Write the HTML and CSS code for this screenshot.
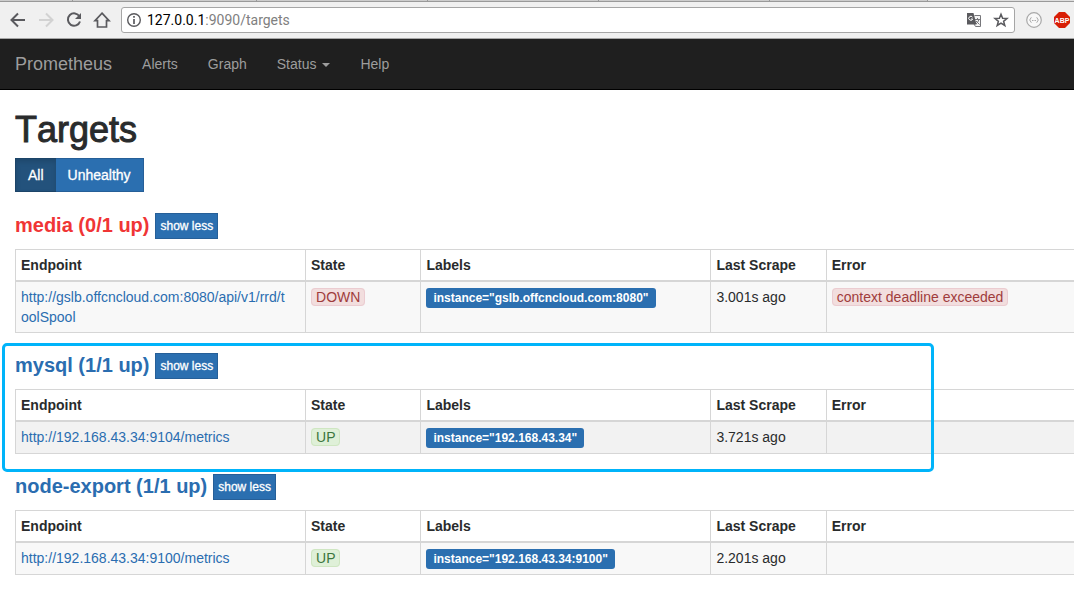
FILE: index.html
```html
<!DOCTYPE html>
<html lang="en">
<head>
	<meta charset="UTF-8">
	<title>Prometheus Time Series Collection and Processing Server</title>
	<link rel="stylesheet" href="styles.css">
</head>
<body>
	<div class="browser">
		<div class="tab-strip">
			<span class="tab tab-active"></span>
			<span class="tab tab-wide"></span>
			<span class="tab"></span>
			<span class="tab"></span>
			<span class="tab"></span>
			<span class="tab tab-last"></span>
		</div>
		<div class="toolbar">
			<button class="tool" type="button" aria-label="Back">
				<svg width="18" height="18" viewBox="0 0 18 18"><path d="M16 9H3M9 2.500L2.500 9L9 15.500" fill="none" stroke="#5a5a5e" stroke-width="2"/></svg>
			</button>
			<button class="tool" type="button" aria-label="Forward" disabled>
				<svg width="18" height="18" viewBox="0 0 18 18"><path d="M2 9H15M9 2.500L15.500 9L9 15.500" fill="none" stroke="#d2d2d2" stroke-width="2"/></svg>
			</button>
			<button class="tool" type="button" aria-label="Reload">
				<svg width="18" height="18" viewBox="0 0 18 18"><path d="M14.500 5.500A6.200 6.200 0 1 0 15 10.500" fill="none" stroke="#5a5a5e" stroke-width="2"/><path d="M16 2V8H10Z" fill="#5a5a5e"/></svg>
			</button>
			<button class="tool" type="button" aria-label="Home">
				<svg width="18" height="18" viewBox="0 0 18 18"><path d="M9 2.200L16 9.700H13.500V16H4.500V9.700H2Z" fill="none" stroke="#5a5a5e" stroke-width="1.700"/></svg>
			</button>
			<div class="address">
				<svg width="16" height="16" viewBox="0 0 16 16"><circle cx="8" cy="8" r="6.300" fill="none" stroke="#5a5a5e" stroke-width="1.400"/><path d="M8 7V12M8 4V5.700" stroke="#5a5a5e" stroke-width="1.700"/></svg>
				<div class="url" role="textbox" aria-label="Address"><b>127.0.0.1</b>:9090/targets</div>
				<button class="tool" type="button" aria-label="Translate">
					<svg width="16" height="16" viewBox="0 0 16 16"><path d="M8.500 3.500H14.500V14.500H9.500L8 12" fill="#f4f4f4" stroke="#77777b"/><path d="M1 1H7.500L10.500 12.500H1Z" fill="#5a5a5e"/><path d="M6.500 5.200A2 2 0 1 0 6.700 7H5" fill="none" stroke="#fff"/><path d="M9 7.500H14M11.500 6V7.500M13 7.500Q12 10.500 10 12M10 9L13.500 12.500" fill="none" stroke="#77777b"/></svg>
				</button>
				<button class="tool" type="button" aria-label="Bookmark">
					<svg width="16" height="16" viewBox="0 0 16 16"><path d="M8 2.200L9.600 6.300L14 6.500L10.600 9.300L11.800 13.500L8 11.100L4.200 13.500L5.400 9.300L2 6.500L6.400 6.300Z" fill="none" stroke="#5a5a5e" stroke-width="1.500"/></svg>
				</button>
			</div>
			<button class="tool" type="button" aria-label="JSON viewer">
				<svg width="16" height="16" viewBox="0 0 16 16"><circle cx="8" cy="8" r="7.300" fill="#f8f8f8" stroke="#a9a9a9" stroke-width="1.200"/><path d="M5.500 5.500Q4.500 5.500 4.500 7L3.500 8L4.500 9Q4.500 10.500 5.500 10.500M10.500 5.500Q11.500 5.500 11.500 7L12.500 8L11.500 9Q11.500 10.500 10.500 10.500" fill="none" stroke="#aaa"/><path d="M6 8.500H10" stroke="#aaa" stroke-dasharray="1 0.500"/></svg>
			</button>
			<button class="tool" type="button" aria-label="Adblock Plus">
				<svg width="16" height="16" viewBox="0 0 16 16"><path d="M5 0H11L16 5V11L11 16H5L0 11V5Z" fill="#d81e05"/><text class="abp" x="8" y="11" text-anchor="middle">ABP</text></svg>
			</button>
		</div>
	</div>

	<nav class="navbar">
		<a class="navbar-brand" href="#">Prometheus</a>
		<a href="#">Alerts</a>
		<a href="#">Graph</a>
		<a href="#">Status <span class="caret"></span></a>
		<a href="#">Help</a>
	</nav>

	<div class="container-fluid">
		<h1>Targets</h1>
		<div class="btn-group">
			<button class="btn active" type="button">All</button>
			<button class="btn" type="button">Unhealthy</button>
		</div>

		<section class="job">
			<h2 class="job-header"><a class="danger" href="#job-media">media (0/1 up)</a> <button class="btn btn-xs" type="button">show less</button></h2>
			<table class="table" id="job-media">
				<thead>
					<tr>
						<th class="col-endpoint">Endpoint</th>
						<th class="col-state">State</th>
						<th class="col-labels">Labels</th>
						<th class="col-scrape">Last Scrape</th>
						<th>Error</th>
					</tr>
				</thead>
				<tbody>
					<tr>
						<td><a href="#">http://gslb.offcncloud.com:8080/api/v1/rrd/t<wbr>oolSpool</a></td>
						<td><span class="alert alert-danger">DOWN</span></td>
						<td><span class="label">instance="gslb.offcncloud.com:8080"</span></td>
						<td>3.001s ago</td>
						<td><span class="alert alert-danger">context deadline exceeded</span></td>
					</tr>
				</tbody>
			</table>
		</section>

		<section class="job job-marked">
			<h2 class="job-header"><a href="#job-mysql">mysql (1/1 up)</a> <button class="btn btn-xs" type="button">show less</button></h2>
			<table class="table" id="job-mysql">
				<thead>
					<tr>
						<th class="col-endpoint">Endpoint</th>
						<th class="col-state">State</th>
						<th class="col-labels">Labels</th>
						<th class="col-scrape">Last Scrape</th>
						<th>Error</th>
					</tr>
				</thead>
				<tbody>
					<tr class="hovered">
						<td><a href="#">http://192.168.43.34:9104/metrics</a></td>
						<td><span class="alert alert-success">UP</span></td>
						<td><span class="label">instance="192.168.43.34"</span></td>
						<td>3.721s ago</td>
						<td></td>
					</tr>
				</tbody>
			</table>
		</section>

		<section class="job">
			<h2 class="job-header"><a href="#job-node-export">node-export (1/1 up)</a> <button class="btn btn-xs" type="button">show less</button></h2>
			<table class="table" id="job-node-export">
				<thead>
					<tr>
						<th class="col-endpoint">Endpoint</th>
						<th class="col-state">State</th>
						<th class="col-labels">Labels</th>
						<th class="col-scrape">Last Scrape</th>
						<th>Error</th>
					</tr>
				</thead>
				<tbody>
					<tr>
						<td><a href="#">http://192.168.43.34:9100/metrics</a></td>
						<td><span class="alert alert-success">UP</span></td>
						<td><span class="label">instance="192.168.43.34:9100"</span></td>
						<td>2.201s ago</td>
						<td></td>
					</tr>
				</tbody>
			</table>
		</section>
	</div>
</body>
</html>
```
FILE: styles.css
```css
*,
*::after {
	box-sizing: border-box;
}

body {
	margin: 0;
	background: #fff;
	color: #292b2c;
	font: 14px/20px "Helvetica Neue", "Liberation Sans", Arial, sans-serif;
}

a {
	color: #2a6db0;
	text-decoration: none;
}

/* browser chrome */
.tab-strip {
	display: flex;
	height: 2px;
	background: #dedede;
	border-bottom: 1px solid #999;
}

.tab {
	width: 171px;
	background: #ccc;
	border-right: 1px solid #999;
}

.tab-active {
	width: 73px;
}

.tab-wide {
	width: 184px;
}

.tab-last {
	width: 158px;
}

.toolbar {
	display: flex;
	align-items: center;
	gap: 10px;
	height: 37px;
	padding: 0 4px 0 9px;
	background: #f0f0f0;
	border-bottom: 1px solid #a6a6a6;
}

.tool {
	display: flex;
	padding: 0;
	background: none;
	border: 0;
}

.address {
	display: flex;
	flex: 1;
	align-items: center;
	gap: 11px;
	height: 26px;
	padding: 0 5px 0 4px;
	background: #fff;
	border: 1px solid #a6a6a6;
	border-radius: 3px;
}

.address + .tool {
	margin: 0 2px 0 1px;
}

.url {
	flex: 1;
	margin-left: -6px;
	color: #808080;
	font-family: Roboto, sans-serif;
}

.url b {
	color: #000;
	font-weight: normal;
}

.abp {
	fill: #fff;
	font: bold 7px "Liberation Sans", sans-serif;
}

/* page header */
.navbar {
	display: flex;
	align-items: center;
	height: 51px;
	background: #1f1f1f;
	border-bottom: 1px solid #000;
}

.navbar a {
	padding: 0 15px;
	color: #9d9d9d;
}

.navbar .navbar-brand {
	font-size: 18px;
}

.caret {
	display: inline-block;
	margin-left: 2px;
	vertical-align: middle;
	border-top: 4px solid;
	border-right: 4px solid transparent;
	border-left: 4px solid transparent;
}

/* targets */
.container-fluid {
	padding: 20px 0 0 15px;
}

h1 {
	margin: 0 0 8px;
	font-size: 36px;
	line-height: 40px;
	font-weight: 500;
	font-kerning: none;
	-webkit-text-stroke: 1px;
}

.btn-group {
	display: flex;
	margin-bottom: 21px;
}

.btn {
	padding: 6px 12px;
	background: #2b6fb0;
	border: 1px solid #265f98;
	color: #fff;
	font: inherit;
	-webkit-text-stroke: 0.3px;
}

.btn.active {
	background: #23527c;
	border-color: #1c4468;
	border-right: 0;
	box-shadow: inset 0 3px 5px rgba(0, 0, 0, 0.125);
}

.btn + .btn {
	border-left: 0;
}

.btn-xs {
	padding: 3px 4px;
	font-size: 12px;
	font-weight: normal;
	line-height: 18px;
}

.job {
	position: relative;
	padding-bottom: 20px;
}

.job-header {
	display: flex;
	align-items: flex-start;
	gap: 6px;
	margin: 0 0 10px;
	font-size: 20px;
	line-height: 24px;
}

.job-header .danger {
	color: #f03535;
}

/* outlined job */
.job-marked::after {
	content: "";
	position: absolute;
	top: -10px;
	left: -13px;
	width: 932px;
	bottom: 2px;
	border: 3px solid #00b4fa;
	border-radius: 5px;
	pointer-events: none;
}

.table {
	width: 100%;
	table-layout: fixed;
	border-collapse: collapse;
}

.table th,
.table td {
	padding: 5px;
	border: 1px solid #d6d6d6;
	text-align: left;
	vertical-align: top;
	overflow-wrap: anywhere;
}

.table th {
	border-bottom-width: 2px;
}

.table th:last-child,
.table td:last-child {
	border-right: 0;
}

.table tbody tr {
	background: #f8f8f8;
}

.table tbody .hovered {
	background: #f2f2f2;
}

.col-endpoint,
.col-labels {
	width: 27.4%;
}

.col-state,
.col-scrape {
	width: 10.9%;
}

.alert {
	padding: 0 4px;
	border: 1px solid;
	border-radius: 4px;
}

.alert-danger {
	background: #f2dede;
	border-color: #ebccd1;
	color: #a03c3c;
}

.alert-success {
	background: #dff0d8;
	border-color: #cfe6c2;
	color: #3c763d;
}

.label {
	display: inline-block;
	padding: 0 7px;
	background: #2b6fb0;
	border-radius: 3px;
	color: #fff;
	font-size: 12px;
	font-weight: bold;
}
```
